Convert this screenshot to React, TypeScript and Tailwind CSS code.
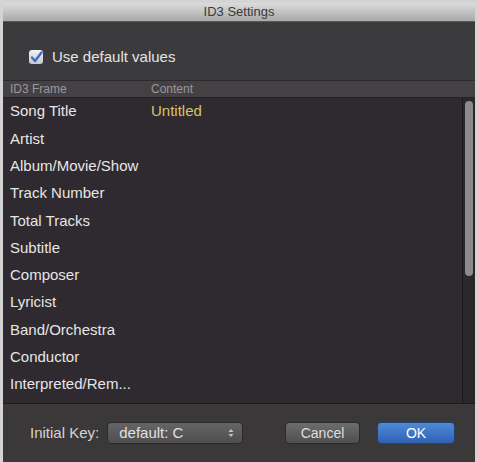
const frames = [
  "Song Title",
  "Artist",
  "Album/Movie/Show",
  "Track Number",
  "Total Tracks",
  "Subtitle",
  "Composer",
  "Lyricist",
  "Band/Orchestra",
  "Conductor",
  "Interpreted/Rem...",
];

export default function App() {
  return (
    <div
      className="w-[478px] h-[462px] bg-[#d4d4d4] pl-[3px] pr-[3px] pt-[3px] flex flex-col"
      style={{ fontFamily: '"Liberation Sans", Arial, sans-serif' }}
    >
      {/* title bar */}
      <div className="h-[19px] shrink-0 bg-gradient-to-b from-[#dcdcdc] to-[#a9a9a9] border-b border-[#5a5a5a] flex items-center justify-center">
        <span className="text-[13px] text-[#3a3a3a]">ID3 Settings</span>
      </div>

      <div className="flex-1 flex flex-col bg-[#3b3a3c]">
        {/* checkbox */}
        <div className="h-[58px] shrink-0 flex items-center pl-[26px] pt-[12px] gap-[9px]">
          <div className="w-[14px] h-[14px] rounded-[3px] bg-gradient-to-b from-[#f2f2f2] to-[#c9c9c9] flex items-center justify-center">
            <svg width="13" height="13" viewBox="0 0 13 13">
              <path d="M2 6.5 L5 10 L11.5 1.5" fill="none" stroke="#3a6fd0" strokeWidth="2.4" strokeLinecap="round" strokeLinejoin="round" />
            </svg>
          </div>
          <span className="text-[15px] text-[#e4e4e4]">Use default values</span>
        </div>

        {/* table */}
        <div className="flex-1 flex flex-col border-t border-[#2c2a2d]">
          <div className="h-[17px] shrink-0 flex items-center bg-[#444145] border-b border-[#262327] text-[12px] text-[#9a979b]">
            <span className="pl-[7px] w-[148px]">ID3 Frame</span>
            <span>Content</span>
          </div>
          <div className="flex h-[306px] bg-[#2e2a2f] border-b border-[#1e1c1f]">
            <div className="flex-1 flex flex-col">
              {frames.map((f, i) => (
                <div key={f} className="h-[27.3px] flex items-center text-[15px] text-[#e6e6e6]">
                  <span className="pl-[7px] w-[148px]">{f}</span>
                  {i === 0 && <span className="text-[#d8c467]">Untitled</span>}
                </div>
              ))}
            </div>
            <div className="w-[13px] border-l border-[#1a181b] bg-[#2b282c] flex justify-center pt-[3px]">
              <div className="w-[8px] h-[175px] rounded-full bg-[#8b8a8c]" />
            </div>
          </div>
        </div>

        {/* bottom bar */}
        <div className="h-[58px] shrink-0 flex items-center pl-[27px] pr-[20px] bg-[#3a3839]">
          <span className="text-[15px] text-[#d4d4d4]">Initial Key:</span>
          <div className="ml-[8px] w-[136px] h-[22px] rounded-[4px] border border-[#2a2a2a] bg-gradient-to-b from-[#666566] to-[#4e4d4f] flex items-center pl-[11px] pr-[8px]">
            <span className="flex-1 text-[15px] text-[#e0e0e0]">default: C</span>
            <svg width="6" height="10" viewBox="0 0 6 10">
              <path d="M0.5 4 L3 1 L5.5 4 Z M0.5 6 L3 9 L5.5 6 Z" fill="#c4c4c4" />
            </svg>
          </div>
          <div className="flex-1" />
          <button className="w-[75px] h-[22px] rounded-[4px] border border-[#2a2a2a] bg-gradient-to-b from-[#6d6c6e] to-[#4f4e50] text-[14px] text-[#dedede]">
            Cancel
          </button>
          <button className="ml-[17px] w-[78px] h-[22px] rounded-[4px] border border-[#23426e] bg-gradient-to-b from-[#4f8ad6] to-[#2f62b4] text-[14px] text-white">
            OK
          </button>
        </div>
      </div>
    </div>
  );
}
